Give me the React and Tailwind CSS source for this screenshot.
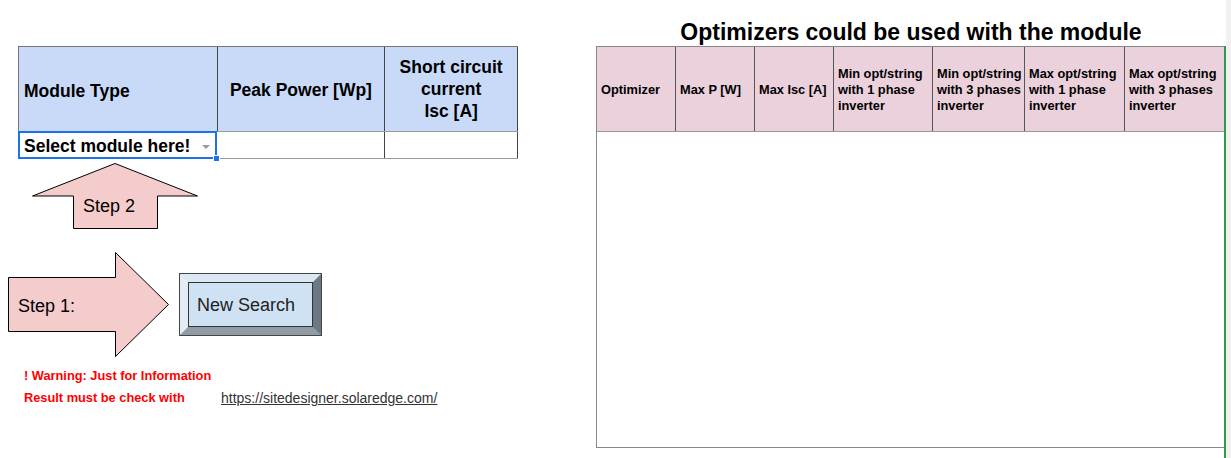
const optCols = [
  { w: "w-[79px]", lines: ["Optimizer"] },
  { w: "w-[79px]", lines: ["Max P [W]"] },
  { w: "w-[79px]", lines: ["Max Isc [A]"] },
  { w: "w-[99px]", lines: ["Min opt/string", "with 1 phase", "inverter"] },
  { w: "w-[92px]", lines: ["Min opt/string", "with 3 phases", "inverter"] },
  { w: "w-[100px]", lines: ["Max opt/string", "with 1 phase", "inverter"] },
  { w: "w-[99px]", lines: ["Max opt/string", "with 3 phases", "inverter"] },
];

const ModuleTable = () => (
  <div className="ml-[18px] w-[500px] border-l border-t border-[#777]">
    <div className="flex h-[85px] bg-[#c9daf8] border-b border-[#999] text-[17.5px] font-bold leading-[22px]">
      <div className="w-[199px] flex items-center pl-[5px] border-r border-[#444] pt-[4px]">
        Module Type
      </div>
      <div className="w-[168px] flex items-center justify-center border-r border-[#444] pt-[2px]">
        Peak Power [Wp]
      </div>
      <div className="w-[133px] flex items-center justify-center text-center border-r border-[#444]">
        Short circuit
        <br />
        current
        <br />
        Isc [A]
      </div>
    </div>
    <div className="flex h-[27px] border-b border-[#999] text-[17.5px] font-bold">
      <div className="relative w-[199px] flex items-center pl-[4px] pt-[2px] border-2 border-[#1a73e8] -ml-px -mt-px h-[28px]">
        Select module here!
        <span className="absolute right-[5px] top-[12px] w-0 h-0 border-l-[4px] border-r-[4px] border-t-[4px] border-l-transparent border-r-transparent border-t-[#999]" />
        <span className="absolute -right-[5px] -bottom-[5px] w-[7px] h-[7px] bg-[#1a73e8] border border-white" />
      </div>
      <div className="w-[168px] border-r border-[#444]" />
      <div className="w-[133px] border-r border-[#444]" />
    </div>
  </div>
);

const UpArrow = () => (
  <svg width="166" height="67" className="block">
    <polygon
      points="83,0.5 165.5,33 125.5,33 125.5,65.5 41.5,65.5 41.5,33 0.5,33"
      fill="#f4cccc"
      stroke="#000"
      strokeWidth="1"
    />
    <text x="51" y="49" fontSize="18" fontFamily="Liberation Sans, Arial, sans-serif" fill="#000">
      Step 2
    </text>
  </svg>
);

const RightArrow = () => (
  <svg width="161" height="105" className="block">
    <polygon
      points="0.5,25.5 107.5,25.5 107.5,0.5 160.5,52.5 107.5,104.5 107.5,79.5 0.5,79.5"
      fill="#f4cccc"
      stroke="#000"
      strokeWidth="1"
    />
    <text x="10" y="59.5" fontSize="18" fontFamily="Liberation Sans, Arial, sans-serif" fill="#000">
      Step 1:
    </text>
  </svg>
);

const NewSearchButton = () => (
  <button className="block border border-[#444] bg-white p-0 cursor-pointer">
    <div className="border-[8px] border-t-[#dbe7f2] border-l-[#e4edf6] border-r-[#6c7985] border-b-[#909ba6]">
      <div className="w-[125px] h-[45px] border border-[#333] bg-[#cfe2f3] flex items-center pl-[8px] pt-[1px] text-[18px] text-[#222]">
        New Search
      </div>
    </div>
  </button>
);

export default function App() {
  return (
    <div className="flex w-[1231px] h-[458px] overflow-hidden bg-white text-black font-['Liberation_Sans',Arial,sans-serif]">
      <div className="w-[596px] shrink-0 pt-[46px]">
        <ModuleTable />
        <div className="ml-[32px] mt-[4px]">
          <UpArrow />
        </div>
        <div className="flex items-center mt-[22px] ml-[8px]">
          <RightArrow />
          <div className="ml-[10px]">
            <NewSearchButton />
          </div>
        </div>
        <div className="ml-[24px] mt-[8px] text-[12.8px] font-bold text-[#ff0000] leading-[22px]">
          <div>! Warning: Just for Information</div>
          <div className="flex">
            <span className="w-[197px]">Result must be check with</span>
            <a
              href="#"
              className="font-normal text-[14px] text-[#333] underline"
            >
              https://sitedesigner.solaredge.com/
            </a>
          </div>
        </div>
      </div>

      <div className="w-[630px] shrink-0 flex flex-col">
        <div className="h-[46px] flex items-end justify-center pb-[1px]">
          <h1 className="text-[23px] font-bold leading-[26px]">
            Optimizers could be used with the module
          </h1>
        </div>
        <div className="flex-1 border-r-2 border-[#2e9a4e]">
          <div className="h-[402px] border-l border-t border-b border-[#888] flex flex-col">
            <div className="flex h-[85px] bg-[#ead1dc] border-b border-[#999] text-[12.8px] font-bold leading-[16px]">
              {optCols.map((c, i) => (
                <div
                  key={i}
                  className={`${c.w} flex flex-col justify-center pl-[4px] pt-[2px] ${i < optCols.length - 1 ? "border-r border-[#555]" : ""}`}
                >
                  {c.lines.map((l) => (
                    <div key={l} className="whitespace-nowrap">
                      {l}
                    </div>
                  ))}
                </div>
              ))}
            </div>
            <div className="flex-1 bg-white" />
          </div>
        </div>
      </div>

      <div className="flex-1 bg-[#f1f1f1]" />
    </div>
  );
}
